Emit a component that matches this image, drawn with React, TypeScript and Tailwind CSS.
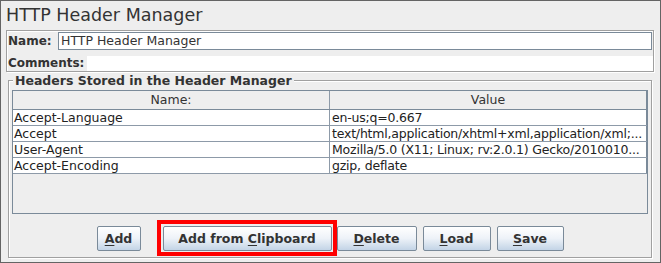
import React from "react";

const rows: [string, string][] = [
  ["Accept-Language", "en-us;q=0.667"],
  ["Accept", "text/html,application/xhtml+xml,application/xml;..."],
  ["User-Agent", "Mozilla/5.0 (X11; Linux; rv:2.0.1) Gecko/2010010..."],
  ["Accept-Encoding", "gzip, deflate"],
];

function Btn({
  pre,
  u,
  post,
  w,
  className = "",
  children,
}: {
  pre?: string;
  u: string;
  post: string;
  w: string;
  className?: string;
  children?: React.ReactNode;
}) {
  return (
    <div className={`relative ${w} ${className}`}>
      <div className="h-[25px] w-full border border-[#7a8a99] rounded-[2px] bg-gradient-to-b from-[#ffffff] via-[#edf2f8] to-[#c3d4e6] flex items-center justify-center text-[12.5px] font-bold text-[#333333] leading-[15px]">
        <span>
          {pre}
          <span className="underline underline-offset-[2px] decoration-[1px]">{u}</span>
          {post}
        </span>
      </div>
      {children}
    </div>
  );
}

export default function App() {
  return (
    <div
      className="w-[661px] h-[263px] bg-[#eeeeee] border border-[#646464] overflow-hidden text-[#333333]"
      style={{ fontFamily: '"DejaVu Sans", Verdana, sans-serif' }}
    >
      <div className="pt-[4px] pl-[5px] h-[24px] text-[17.5px] leading-[20px] whitespace-nowrap">
        HTTP Header Manager
      </div>

      {/* Name panel */}
      <div className="mt-[5px] ml-[5px] w-[648px] h-[42px] border border-[#a0a0a0] shadow-[inset_1px_1px_0_#ffffff,1px_1px_0_#ffffff]">
        <div className="pt-[1px] flex items-center h-[19px]">
          <div className="w-[51px] pl-[1px] text-[12px] font-bold leading-[18px]">Name:</div>
          <div className="flex-1 mr-[1px] h-[18px] bg-white border border-[#7a8a99] pl-[2px] text-[12.5px] leading-[16px] whitespace-nowrap">
            HTTP Header Manager
          </div>
        </div>
        <div className="mt-[6px] flex h-[15px]">
          <div className="w-[80px] pl-[1px] text-[12px] font-bold leading-[15px]">Comments:</div>
          <div className="flex-1 bg-white" />
        </div>
      </div>

      {/* Headers group */}
      <div className="relative mt-[8px] ml-[7px] w-[644px] h-[178px] border border-[#a0a0a0] shadow-[inset_1px_1px_0_#ffffff,1px_1px_0_#ffffff]">
        <div className="absolute -top-[7px] left-[4px] px-[2px] bg-[#eeeeee] text-[12.5px] font-bold leading-[14px] whitespace-nowrap">
          Headers Stored in the Header Manager
        </div>
        <div className="pt-[9px] pl-[3px]">
          <div className="w-[636px] h-[124px] border border-[#7a8a99] bg-[#eeeeee] text-[12.5px] text-[#222222]">
            <div className="flex h-[19px] border-b border-[#7a8a99] bg-[#eeeeee] leading-[18px] text-[#333333]">
              <div className="w-[317px] border-r border-[#8d9aa8] text-center">Name:</div>
              <div className="flex-1 border-r border-[#7a8a99] text-center">Value</div>
            </div>
            {rows.map(([n, v]) => (
              <div key={n} className="flex h-[16px] border-b border-[#8d9aa8] bg-white leading-[15px]">
                <div className="w-[317px] border-r border-[#8d9aa8] pl-[1px] whitespace-nowrap overflow-hidden">{n}</div>
                <div className="flex-1 min-w-0 border-r border-[#7a8a99] pl-[2px] whitespace-nowrap overflow-hidden tracking-[-0.2px]">{v}</div>
              </div>
            ))}
          </div>
          <div className="mt-[12px] flex justify-center pr-[3px]">
            <Btn u="A" post="dd" w="w-[44px]" />
            <Btn pre="Add from " u="C" post="lipboard" w="w-[169px]" className="ml-[22px]">
              <div className="absolute -left-[6px] -top-[6px] -right-[5px] -bottom-[5px] border-[4px] border-[#ff0000]" />
            </Btn>
            <Btn u="D" post="elete" w="w-[80px]" className="ml-[5px]" />
            <Btn u="L" post="oad" w="w-[68px]" className="ml-[6px]" />
            <Btn u="S" post="ave" w="w-[67px]" className="ml-[6px]" />
          </div>
        </div>
      </div>
    </div>
  );
}
